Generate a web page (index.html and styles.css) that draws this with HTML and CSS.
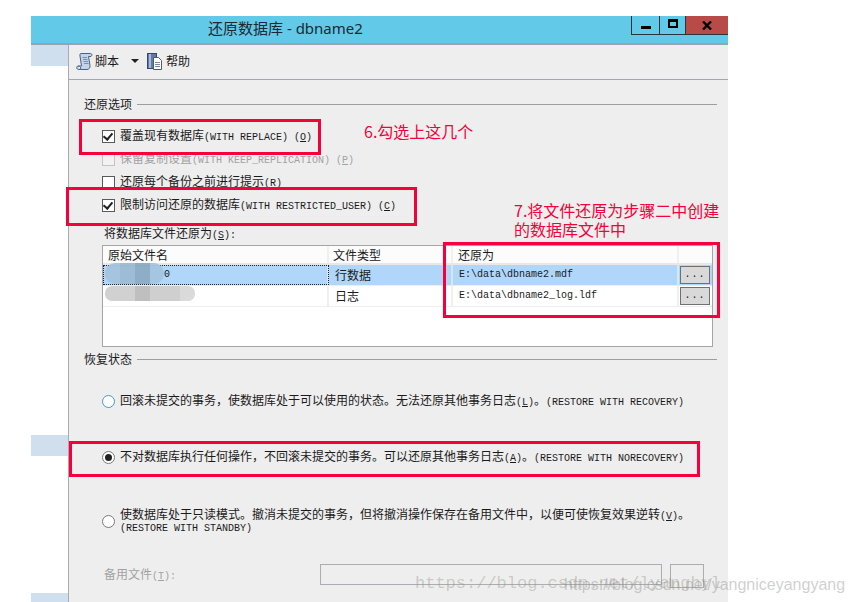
FILE: index.html
```html
<!DOCTYPE html>
<html lang="zh-CN">
<head>
    <meta charset="UTF-8">
    <title>还原数据库 - dbname2</title>
    <link rel="stylesheet" href="styles.css">
</head>
<body>

<div class="window">
    <div class="title-bar">
        <div class="title-text">还原数据库 - dbname2</div>
        <div class="win-buttons">
            <div class="win-btn win-min"><span class="min-glyph"></span></div>
            <div class="win-btn win-max"><span class="max-glyph"></span></div>
            <div class="win-btn win-close">
                <svg width="10" height="9" viewBox="0 0 10 9"><path d="M1 0.5L9 8.5M9 0.5L1 8.5" stroke="#000" stroke-width="2.4" fill="none"/></svg>
            </div>
        </div>
    </div>

    <div class="window-body">
        <div class="side-pane">
            <div class="side-stripe stripe-one"></div>
            <div class="side-stripe stripe-two"></div>
            <div class="side-stripe stripe-three"></div>
        </div>

        <div class="panel">
            <div class="toolbar">
                <svg class="tool-icon" width="17" height="17" viewBox="0 0 17 17">
                    <path d="M5 .5H14.5C16 .5 16.5 2.5 15 3.5H12.5L14 12.5C14.3 14.8 13 16.5 11 16.5H2.5C.5 16.5 0 13.5 2 13H5.5L4 3C3.8 1.5 4 .5 5 .5Z" fill="#c5d3e4" stroke="#44648a"/>
                    <path d="M6.5 4.5H11M7 6.5H11.5M7.5 8.5H12M8 10.5H12.5" stroke="#7390b3"/>
                    <path d="M2 13.2C4 13 5 14 4.6 16.4" fill="#fff" stroke="#44648a"/>
                </svg>
                <span class="tool-label">脚本</span>
                <span class="tool-caret"></span>
                <svg class="tool-icon help-icon" width="16" height="17" viewBox="0 0 16 17">
                    <rect x=".5" y=".5" width="9" height="15" fill="#5f79a8" stroke="#34486f"/>
                    <rect x="2" y="1" width="2" height="14" fill="#a9bad6"/>
                    <path d="M6.5 4.5H11.5L14.5 7.5V16.5H6.5Z" fill="#fff" stroke="#4d5c74"/>
                    <path d="M8 9.5H13M8 11.5H13M8 13.5H13" stroke="#7a8aa3"/>
                </svg>
                <span class="tool-label">帮助</span>
            </div>

            <div class="content">
                <div class="group-head group-restore">
                    <span>还原选项</span>
                    <div class="group-line"></div>
                </div>

                <div class="check-list">
                    <div class="check-row">
                        <span class="check checked"></span>
                        <span>覆盖现有数据库<span class="en">(WITH REPLACE) (<u>O</u>)</span></span>
                    </div>
                    <div class="check-row disabled">
                        <span class="check"></span>
                        <span>保留复制设置<span class="en">(WITH KEEP_REPLICATION) (<u>P</u>)</span></span>
                    </div>
                    <div class="check-row">
                        <span class="check"></span>
                        <span>还原每个备份之前进行提示<span class="en">(<u>R</u>)</span></span>
                    </div>
                    <div class="check-row">
                        <span class="check checked"></span>
                        <span>限制访问还原的数据库<span class="en">(WITH RESTRICTED_USER) (<u>C</u>)</span></span>
                    </div>
                </div>

                <div class="files-label">将数据库文件还原为<span class="en">(<u>S</u>):</span></div>

                <div class="file-table">
                    <div class="file-row file-head">
                        <div class="cell cell-name">原始文件名</div>
                        <div class="cell cell-type">文件类型</div>
                        <div class="cell cell-path">还原为</div>
                        <div class="cell cell-btn"></div>
                    </div>
                    <div class="file-row selected">
                        <div class="cell cell-name focus-cell">
                            <span class="en name-end">0</span>
                            <div class="mosaic mosaic-one">
                                <i style="width:15px;background:#a5c4de"></i><i style="width:15px;background:#9ebbd4"></i><i style="width:15px;background:#8dabc5"></i><i style="width:14px;background:#a5c6e2"></i>
                            </div>
                        </div>
                        <div class="cell cell-type">行数据</div>
                        <div class="cell cell-path"><span class="en">E:\data\dbname2.mdf</span></div>
                        <div class="cell cell-btn"><span class="dots-btn">...</span></div>
                    </div>
                    <div class="file-row">
                        <div class="cell cell-name">
                            <div class="mosaic mosaic-two">
                                <i style="width:30px;background:#cfcfcf"></i><i style="width:15px;background:#bcbcbc"></i><i style="width:30px;background:#cdcdcd"></i><i style="width:15px;background:#d9d9d9"></i>
                            </div>
                        </div>
                        <div class="cell cell-type">日志</div>
                        <div class="cell cell-path"><span class="en">E:\data\dbname2_log.ldf</span></div>
                        <div class="cell cell-btn"><span class="dots-btn">...</span></div>
                    </div>
                </div>

                <div class="group-head group-state">
                    <span>恢复状态</span>
                    <div class="group-line"></div>
                </div>

                <div class="radio-row radio-recovery">
                    <span class="radio radio-focus"></span>
                    <span>回滚未提交的事务，使数据库处于可以使用的状态。无法还原其他事务日志<span class="en">(<u>L</u>)</span>。<span class="en">(RESTORE WITH RECOVERY)</span></span>
                </div>
                <div class="radio-row radio-norecovery">
                    <span class="radio radio-on"></span>
                    <span>不对数据库执行任何操作，不回滚未提交的事务。可以还原其他事务日志<span class="en">(<u>A</u>)</span>。<span class="en">(RESTORE WITH NORECOVERY)</span></span>
                </div>
                <div class="radio-row radio-standby">
                    <span class="radio"></span>
                    <div class="standby-text">
                        <div>使数据库处于只读模式。撤消未提交的事务，但将撤消操作保存在备用文件中，以便可使恢复效果逆转<span class="en">(<u>V</u>)</span>。</div>
                        <div class="en standby-en">(RESTORE WITH STANDBY)</div>
                    </div>
                </div>

                <div class="standby-file">
                    <span class="standby-label">备用文件<span class="en">(<u>T</u>):</span></span>
                    <div class="standby-input"></div>
                    <div class="standby-btn"></div>
                </div>
            </div>
        </div>
    </div>
</div>

<!-- annotations drawn over the screenshot -->
<div class="mark mark-replace"></div>
<div class="mark mark-user"></div>
<div class="mark mark-path"></div>
<div class="mark mark-norecovery"></div>
<div class="note note-six">6.勾选上这几个</div>
<div class="note note-seven">7.将文件还原为步骤二中创建<br>的数据库文件中</div>
<div class="watermark wm-mono">https://blog.csdn.net/lyanghyl</div>
<div class="watermark wm-sans">https://blog.csdn.net/yangniceyangyang</div>

</body>
</html>
```

FILE: styles.css
```css
html, body {
    margin: 0;
    height: 602px;
    overflow: hidden;
    background: #fff;
    font-family: "Noto Sans CJK SC", "Liberation Sans", sans-serif;
    font-size: 12px;
    line-height: 16px;
    color: #1a1a1a;
}
.en {
    font-family: "Liberation Mono", monospace;
    font-size: 10px;
}
.window {
    width: 697px;
    height: 586px;
    margin: 16px 0 0 31px;
    display: flex;
    flex-direction: column;
    overflow: hidden;
}
.title-bar {
    height: 27px;
    flex: none;
    display: flex;
    justify-content: space-between;
    align-items: flex-start;
    background: #62c9e9;
    border-bottom: 2px solid #9aa3ab;
}
.title-text {
    margin-left: 177px;
    font-family: "Noto Sans", "Noto Sans CJK SC", sans-serif;
    font-size: 15px;
    line-height: 25px;
    color: #1c2a30;
}
.win-buttons {
    display: flex;
    height: 19px;
}
.win-btn {
    display: flex;
    justify-content: center;
    align-items: center;
    box-sizing: border-box;
    height: 19px;
    border-bottom: 1px solid #26363d;
    border-left: 1px solid #26363d;
}
.win-min {
    width: 28px;
}
.win-max {
    width: 26px;
}
.win-close {
    width: 43px;
    background: #b84b48;
}
.min-glyph {
    width: 10px;
    height: 3px;
    margin-top: 4px;
    background: #000;
}
.max-glyph {
    width: 6px;
    height: 4px;
    margin-bottom: 4px;
    border: 2px solid #000;
    border-top-width: 3px;
}
.window-body {
    flex: 1;
    display: flex;
}
.side-pane {
    width: 37px;
    flex: none;
    display: flex;
    flex-direction: column;
    background: #fff;
}
.side-stripe {
    background: #d0dfee;
    height: 21px;
    flex: none;
}
.stripe-two {
    margin-top: 369px;
}
.stripe-three {
    margin-top: 137px;
    height: 9px;
}
.panel {
    flex: 1;
    display: flex;
    flex-direction: column;
    background: #eee;
    border-left: 1px solid #a9abae;
}
.toolbar {
    height: 35px;
    box-sizing: border-box;
    flex: none;
    display: flex;
    align-items: center;
    padding: 0 0 2px 7px;
    border-bottom: 1px solid #a3a6ad;
}
.tool-label {
    margin-left: 2px;
}
.tool-caret {
    width: 0;
    height: 0;
    margin: 0 8px 0 12px;
    border-left: 4px solid transparent;
    border-right: 4px solid transparent;
    border-top: 4px solid #222;
}
.help-icon {
    margin-right: 1px;
}
.content {
    flex: 1;
    padding-left: 15px;
}
.group-head {
    display: flex;
    align-items: center;
    gap: 5px;
    height: 16px;
}
.group-line {
    flex: 1;
    height: 1px;
    margin-right: 11px;
    background: #9d9da0;
}
.group-restore {
    margin-top: 16px;
}
.check-list {
    margin-top: 13px;
    padding-left: 18px;
}
.check-row {
    display: flex;
    align-items: center;
    gap: 5px;
    height: 23px;
}
.check {
    width: 11px;
    height: 11px;
    flex: none;
    position: relative;
    background: #fff;
    border: 1px solid #5a5a5a;
}
.check.checked::after {
    content: "";
    position: absolute;
    left: 2px;
    top: 0;
    width: 4px;
    height: 7px;
    border-right: 2px solid #222;
    border-bottom: 2px solid #222;
    transform: rotate(40deg);
}
.disabled {
    color: #a2a2a2;
}
.disabled .check {
    border-color: #c4c4c4;
    background: #f2f2f2;
}
.files-label {
    margin: 8px 0 0 20px;
    height: 16px;
}
.file-table {
    box-sizing: border-box;
    width: 611px;
    height: 102px;
    margin: 4px 0 0 18px;
    background: #fff;
    border: 1px solid #a5a5a5;
}
.file-row {
    display: flex;
    height: 21px;
    border-bottom: 1px solid #eeeeee;
    box-sizing: border-box;
}
.file-head {
    height: 19px;
    background: #fcfcfc;
    border-bottom: 2px solid #e8e8e8;
}
.cell {
    box-sizing: border-box;
    display: flex;
    align-items: center;
    border-right: 2px solid #f0f0f0;
    padding-left: 5px;
    position: relative;
}
.cell-name {
    width: 226px;
}
.cell-type {
    width: 124px;
    padding-left: 6px;
}
.cell-path {
    width: 226px;
    padding-left: 6px;
}
.file-head .cell-type {
    padding-left: 4px;
}
.file-head .cell-path {
    padding-left: 5px;
}
.cell-btn {
    width: 33px;
    padding: 0 0 0 1px;
    border-right: none;
}
.selected {
    background: #b0d7fa;
}
.selected .cell {
    border-right-color: #d5e8f9;
}
.focus-cell {
    outline: 1px dotted #222;
    outline-offset: -1px;
}
.name-end {
    margin-left: 56px;
}
.dots-btn {
    box-sizing: border-box;
    width: 30px;
    height: 18px;
    display: flex;
    justify-content: center;
    align-items: center;
    background: #d9d9d9;
    border: 1px solid #707070;
    font-family: "Liberation Mono", monospace;
    font-size: 10px;
    letter-spacing: 1px;
}
.mosaic {
    position: absolute;
    left: 2px;
    display: flex;
    overflow: hidden;
    opacity: .95;
}
.mosaic i {
    display: block;
}
.mosaic-one {
    top: -2px;
    height: 21px;
    border-radius: 10px;
}
.mosaic-two {
    top: 0;
    height: 15px;
    border-radius: 7px;
}
.group-state {
    margin-top: 4px;
}
.radio-row {
    display: flex;
    align-items: center;
    gap: 5px;
    padding-left: 18px;
}
.radio {
    width: 11px;
    height: 11px;
    flex: none;
    position: relative;
    background: #fff;
    border: 1px solid #7a7a7a;
    border-radius: 50%;
}
.radio-focus {
    border-color: #3a9bd8;
}
.radio-on::after {
    content: "";
    position: absolute;
    left: 2px;
    top: 2px;
    width: 7px;
    height: 7px;
    border-radius: 50%;
    background: #222;
}
.radio-recovery {
    margin-top: 26px;
    height: 16px;
}
.radio-norecovery {
    margin-top: 40px;
    height: 16px;
}
.radio-standby {
    margin-top: 43px;
}
.standby-text {
    line-height: 12px;
}
.standby-en {
    line-height: 11px;
}
.standby-file {
    display: flex;
    align-items: flex-start;
    margin: 30px 0 0 20px;
    color: #a2a2a2;
}
.standby-label {
    width: 216px;
    line-height: 20px;
}
.standby-input {
    box-sizing: border-box;
    width: 342px;
    height: 21px;
    border: 1px solid #abadb3;
}
.standby-btn {
    box-sizing: border-box;
    width: 34px;
    height: 24px;
    margin-left: 8px;
    border: 1px solid #adadad;
}
.mark {
    position: absolute;
    box-sizing: border-box;
    border: 3px solid #f5003a;
}
.mark-replace {
    left: 79px;
    top: 119px;
    width: 242px;
    height: 36px;
}
.mark-user {
    left: 66px;
    top: 187px;
    width: 351px;
    height: 39px;
}
.mark-path {
    left: 443px;
    top: 242px;
    width: 277px;
    height: 76px;
}
.mark-norecovery {
    left: 69px;
    top: 441px;
    width: 631px;
    height: 36px;
}
.note {
    position: absolute;
    color: #f5003a;
    font-size: 16px;
    line-height: 19px;
}
.note-six {
    left: 364px;
    top: 122px;
}
.note-seven {
    left: 514px;
    top: 201px;
}
.watermark {
    position: absolute;
    white-space: nowrap;
    color: rgba(150, 150, 135, .42);
}
.wm-mono {
    left: 415px;
    top: 573px;
    font-family: "Liberation Mono", monospace;
    font-size: 17px;
    line-height: 22px;
}
.wm-sans {
    left: 564px;
    top: 575px;
    font-family: "Liberation Sans", sans-serif;
    font-size: 16px;
    line-height: 20px;
    color: rgba(140, 140, 140, .42);
}
```
